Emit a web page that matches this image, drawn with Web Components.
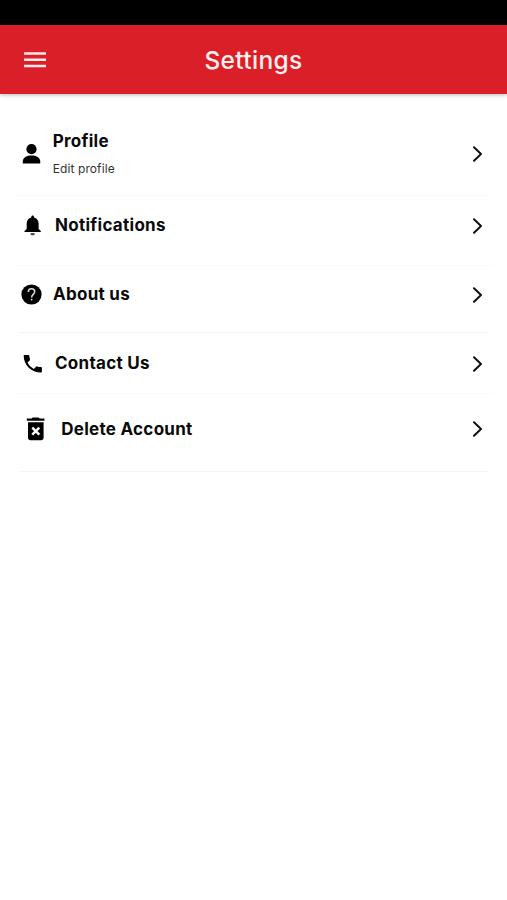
<!DOCTYPE html>
<html lang="en">
<head>
<meta charset="utf-8">
<title>Settings</title>
<style>
html,body{margin:0;height:100%;background:#fff}
body{font-family:Inter,"Liberation Sans",sans-serif;color:#0a0a0a;overflow:hidden}
</style>
</head>
<body>
<settings-page>
  <app-header slot="header">Settings</app-header>
  <setting-row style="--h:102px;--top:39.5px;--line:#fafafa;--inset:15px" icon="person">Profile<span slot="sub">Edit profile</span></setting-row>
  <setting-row style="--h:70px;--top:9.5px;--line:#fafafa;--inset:15px" icon="bell">Notifications</setting-row>
  <setting-row style="--h:67px;--top:8.5px;--line:#f4f4f4" icon="help">About us</setting-row>
  <setting-row style="--h:61px;--top:10.5px;--line:#fafafa;--inset:15px" icon="phone">Contact Us</setting-row>
  <setting-row style="--h:78px;--top:15px;--line:#f4f4f4" icon="trash">Delete Account</setting-row>
</settings-page>
<script>
const ICONS = {
  person: {x: 22, gap: 52.7, svg: '<svg width="20" height="22" viewBox="0 0 20 22"><circle cx="9.5" cy="6.2" r="5.1"/><path d="M.8 20.4v-2.200c0-4 4.200-5.800 8.700-5.800s8.700 1.800 8.700 5.800v2.200z"/></svg>'},
  bell: {x: 23, gap: 55, svg: '<svg width="20" height="22" viewBox="0 0 20 22"><path d="M9.600 .6c.9 0 1.400.6 1.400 1.400v.5c3.100.7 4.600 3.200 4.600 6.300v5.300l2.200 2v1H1.500v-1l2.200-2V8.800c0-3.100 1.500-5.600 4.600-6.300V2C8.300 1.200 8.700.6 9.600.6z"/><path d="M7.400 18.200h4.400c0 1.300-1 2.100-2.200 2.100s-2.200-.8-2.200-2.100z" fill="#333"/></svg>'},
  help: {x: 21, gap: 53, svg: '<svg width="21" height="22" viewBox="0 0 21 22"><circle cx="10.500" cy="10.500" r="10.100"/><path d="M7.300 8c0-2 1.300-3.200 3.200-3.200s3.200 1.200 3.200 3c0 2.600-3.100 2.700-3.100 5.700" fill="none" stroke="#ddd" stroke-width="1.500"/><path d="M9.800 14.800h1.600v1.600H9.800z" fill="#ddd"/></svg>'},
  phone: {x: 22.5, gap: 55, svg: '<svg width="20" height="22" viewBox="0 0 20 22"><path d="M1.700 1.900h3.600c.6 0 .9.400 1 .9.100 1.300.3 2.400.7 3.500.1.400 0 .8-.3 1.100L4.500 9.600c1.400 2.800 3.500 4.900 6.300 6.300l2.300-2.200c.3-.3.700-.4 1.100-.3 1.200.4 2.400.6 3.700.6.600 0 1 .4 1 1v3.600c0 .6-.4 1-1 1C8.500 19.600.7 11.800.7 2.900c0-.6.4-1 1-1z"/></svg>'},
  trash: {x: 26, gap: 61.200, svg: '<svg width="20" height="24" viewBox="0 0 20 24"><path d="M.8 1.500h4.800l1-1h6l1 1h4.800v2.300H.8zM2 5.200h15.600v15.500c0 1.500-1.100 2.500-2.500 2.500H4.500C3.100 23.200 2 22.200 2 20.700z"/><path d="M6.300 10.700l7 7m0-7l-7 7" fill="none" stroke="#fff" stroke-width="2.500"/></svg>'}
};

customElements.define('settings-page', class extends HTMLElement {
  constructor() {
    super();
    this.attachShadow({mode: 'open'}).innerHTML = `
      <style>
        :host{display:flex;flex-direction:column;height:900px;background:#fff}
        .status{height:25px;flex:none;background:#000}
        main{display:flex;flex-direction:column}
      </style>
      <div class="status"></div><slot name="header"></slot><main><slot></slot></main>`;
  }
});

customElements.define('app-header', class extends HTMLElement {
  constructor() {
    super();
    this.attachShadow({mode: 'open'}).innerHTML = `
      <style>
        :host{display:grid;grid-template-columns:1fr auto 1fr;align-items:center;height:69px;flex:none;box-sizing:border-box;
          padding:0 24px;background:#da1f28;color:#fff0f0;box-shadow:0 1px 4px rgba(0,0,0,.28);z-index:1}
        h1{margin:0;font-size:24.500px;line-height:30px;font-weight:500;letter-spacing:.32px}
        svg{display:block}
      </style>
      <svg width="22" height="16" viewBox="0 0 22 16" fill="#ffe9e9"><path d="M0 .2h22v2.500H0zM0 6.600h22v2.500H0zM0 12.800h22v2.500H0z"/></svg>
      <h1><slot></slot></h1>`;
  }
});

customElements.define('setting-row', class extends HTMLElement {
  connectedCallback() {
    const icon = ICONS[this.getAttribute('icon')];
    const hasSub = this.querySelector('[slot=sub]');
    this.attachShadow({mode: 'open'}).innerHTML = `
      <style>
        :host{display:flex;flex-direction:column;justify-content:space-between;height:var(--h);box-sizing:border-box;padding-top:var(--top)}
        .row{display:flex;align-items:center;height:40px;padding:0 24px 0 ${icon.x}px}
        .icon{display:flex;width:${icon.gap - icon.x}px;flex:none}
        .text{flex:1;display:flex;flex-direction:column}
        .title{font-size:17px;line-height:22px;font-weight:650;letter-spacing:.28px;white-space:nowrap;padding-bottom:1px}
        .sub{font-size:12px;line-height:16px;letter-spacing:.1px;color:#333;margin-top:8px}
        .line{height:1px;margin:0 calc(var(--inset,20px) - 1px) 0 var(--inset,20px);background:var(--line)}
        svg{display:block}
      </style>
      <div class="row">
        <div class="icon">${icon.svg}</div>
        <div class="text"><div class="title"><slot></slot></div>${hasSub ? '<div class="sub"><slot name="sub"></slot></div>' : ''}</div>
        <svg width="11" height="16" viewBox="0 0 11 16" fill="none" stroke="#111" stroke-width="2" stroke-linecap="round" stroke-linejoin="round"><path d="M2 1.200L9 8l-7 6.800"/></svg>
      </div>
      <div class="line"></div>`;
  }
});
</script>
</body>
</html>
